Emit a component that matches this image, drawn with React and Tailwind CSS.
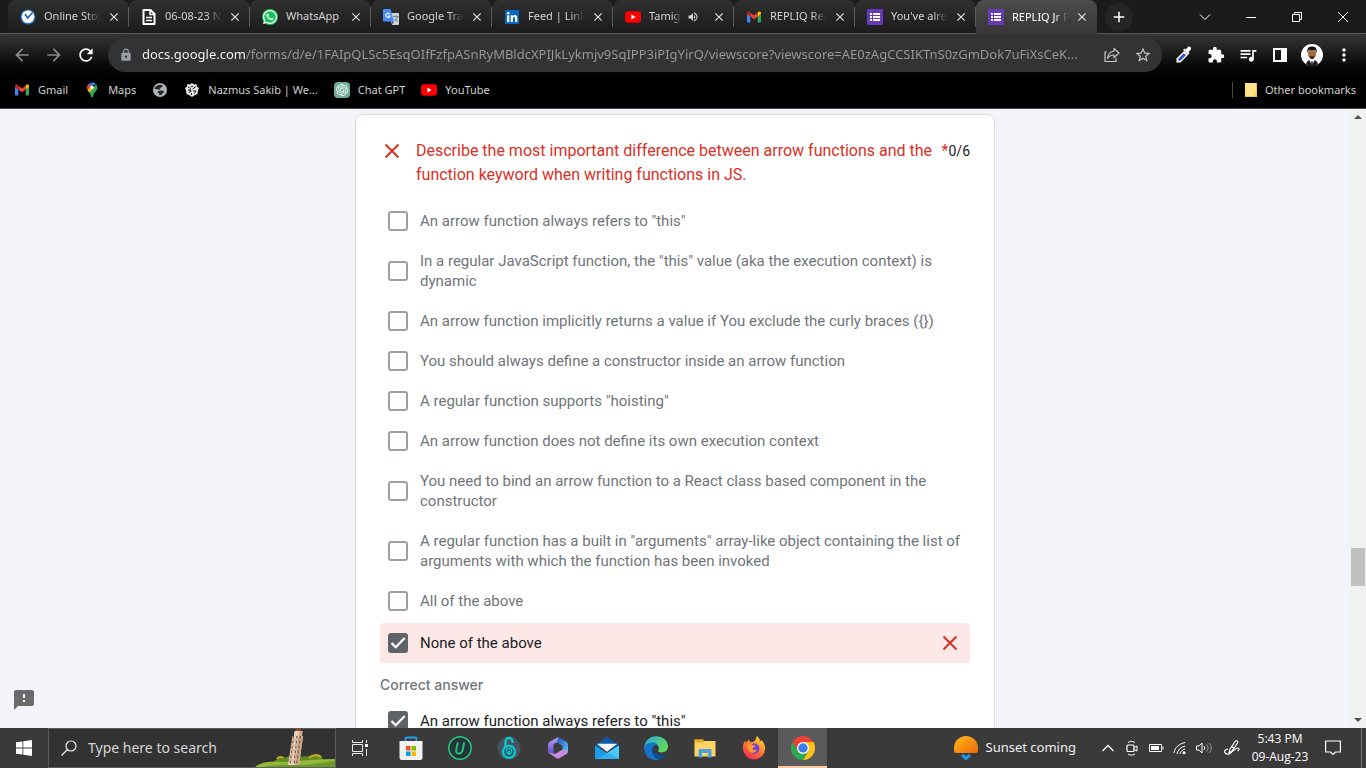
import { useId, useState } from "react";
import {
  MdArrowBack,
  MdArrowForward,
  MdRefresh,
  MdLock,
  MdStarBorder,
  MdExtension,
  MdQueueMusic,
  MdMoreVert,
  MdFeedback,
  MdClose,
  MdAdd,
  MdVolumeUp,
} from "react-icons/md";
import { FaWhatsapp } from "react-icons/fa";
import { SiOpenai } from "react-icons/si";

/* ---------- favicons ---------- */

const ClockFavicon = () => (
  <svg viewBox="0 0 16 16" className="size-4 shrink-0">
    <circle cx="8" cy="8" r="7.600" fill="#1f6fc9" />
    <circle cx="8" cy="7.800" r="6.300" fill="#fff" />
    <path d="M5 5l2.600 4 5-5.500" fill="none" stroke="#1b56a6" strokeWidth="1.500" />
  </svg>
);

const DocFavicon = () => (
  <svg viewBox="0 0 16 16" className="size-4 shrink-0" fill="none" stroke="#fff" strokeWidth="2">
    <path d="M2.500 1h7L13.500 5v10h-11z" strokeLinejoin="round" />
    <path d="M9 1v4.500h4M5 8.500h6M5 11.500h6" strokeWidth="1.500" />
  </svg>
);

const WhatsAppFavicon = () => (
  <span className="flex size-4 shrink-0 items-center justify-center rounded-full bg-[#19c35a] text-white">
    <FaWhatsapp className="size-4" />
  </span>
);

const TranslateFavicon = () => (
  <svg viewBox="0 0 16 16" className="size-4 shrink-0">
    <path d="M6 4h9a1 1 0 0 1 1 1v10a1 1 0 0 1-1 1H9z" fill="#cfd3d8" />
    <path d="M1 0h6.500l3.500 12.500H1a1 1 0 0 1-1-1V1a1 1 0 0 1 1-1z" fill="#4c8bf5" />
    <path d="M8.500 12.500H11L9.500 15.500z" fill="#3a54c4" />
    <path d="M10.500 7.500h5M13 6v1.500M14.500 8c-.5 2-2 3.500-3 4M11.800 9.500c.8 1.500 2 2.500 3 3" stroke="#607988" fill="none" strokeWidth=".9" />
    <path d="M6.800 5.200A2.100 2.100 0 1 0 7 7H5.200" stroke="#fff" fill="none" strokeWidth="1.100" />
  </svg>
);

const LinkedInFavicon = () => (
  <svg viewBox="0 0 16 16" className="size-4 shrink-0">
    <rect x="1" y="1" width="14" height="14" rx="1" fill="#0a66c2" />
    <circle cx="4.200" cy="4.300" r="1.300" fill="#fff" />
    <path d="M3.100 6.300h2.200V13H3.100zM6.700 6.300h2.100v.9c.4-.7 1.200-1.100 2.100-1.100 2 0 2.400 1.400 2.400 3.200V13h-2.200V9.700c0-.9-.1-1.700-1.100-1.700S8.900 8.800 8.900 9.600V13H6.700z" fill="#fff" />
  </svg>
);

const YouTubeFavicon = () => (
  <svg viewBox="0 0 16 16" className="size-4 shrink-0">
    <rect y="2.300" width="16" height="11.400" rx="3" fill="#f00" />
    <path d="M6.400 5.600v4.800L10.600 8z" fill="#fff" />
  </svg>
);

const GmailFavicon = () => (
  <svg viewBox="0 0 16 16" className="size-4 shrink-0">
    <path d="M1 5v7.500a1 1 0 0 0 1 1h2.300V7.300z" fill="#4285f4" />
    <path d="M15 5v7.500a1 1 0 0 1-1 1h-2.300V7.300z" fill="#34a853" />
    <path d="M11.700 3.600v3.900L15 5V4c0-1.400-1.500-2.100-2.600-1.200z" fill="#fbbc04" />
    <path d="M4.300 7.500V3.600L8 6.400l3.700-2.800v3.900L8 10.300z" fill="#ea4335" />
    <path d="M1 4v1l3.300 2.500V3.600l-.7-.8C2.500 1.900 1 2.600 1 4z" fill="#c5221f" />
  </svg>
);

const FormsFavicon = () => (
  <svg viewBox="0 0 16 16" className="size-4 shrink-0">
    <rect width="16" height="16" rx="1" fill="#673ab7" />
    <path d="M3 4h2v2H3zM3 7h2v2H3zM3 10h2v2H3zM6 4h7v2H6zM6 7h7v2H6zM6 10h7v2H6z" fill="#fff" />
  </svg>
);

const MapsIcon = () => (
  <svg viewBox="0 0 16 16" className="size-4">
    <path d="M8 .5a5.200 5.200 0 0 0-4 1.900L6.200 4.300z" fill="#1a73e8" />
    <path d="M4 2.400a5.200 5.200 0 0 0-.6 5.400L9.600 4z" fill="#ea4335" />
    <path d="M8 .5L6.200 4.300l5.800-2C11 1.100 9.600.5 8 .5z" fill="#4285f4" />
    <path d="M3.400 7.800c.5 1.200 1.400 2 2.200 3.200l5-6L8.300 4z" fill="#fbbc04" />
    <path d="M12 2.300c1.500 1.700 1.600 3.900.6 5.700-1.200 2.200-3 3-3.600 6.500-.3 1.400-1.600 1.400-2 0-.3-1.500-.8-2.500-1.400-3.500z" fill="#34a853" />
    <circle cx="8" cy="5.600" r="1.800" fill="#fff" />
  </svg>
);

const GlobeIcon = () => (
  <svg viewBox="0 0 16 16" className="size-4">
    <circle cx="8" cy="8" r="7" fill="#b0b5bb" />
    <path d="M6 3.200c2-1 4.500-.4 4.700.8.100 1.300-1.400 1-2.200 1.700-.6.600.2 1.400-.8 1.700C6.500 7.700 3.500 7 2.500 7 2.600 5.300 4.200 3.800 6 3.200zM8 8.500c1.500-.3 3.500 0 4 1 .3 1-1 1.200-1.500 2-.5.900-1.500 1.800-3 1.700-.8-.3.300-1.600-.6-2-.8-.4-1.500-.6-1.300-1.300.3-.8 1.500-1.200 2.400-1.400z" fill="#26282b" />
  </svg>
);

const CrestIcon = () => (
  <svg viewBox="0 0 16 16" className="size-4">
    <path d="M8 1l2 1.500 2.500-.5.500 2.500L15 6l-1 2.500L13.500 12l-2.500 1-3 2-3-2-2.500-1L2 8.500 1 6l2-1.500L3.500 2 6 2.500z" fill="#e6e6e6" />
    <path d="M4 5l3 1.500M12 4.500L8.500 7M4 8l3 .5-2 2.500M9 9h3l-1.500 2.500M7 4l1 1 1-1M7.500 11v2M6 7l1 3" stroke="#222" fill="none" strokeWidth="1" />
  </svg>
);

const ChatIcon = () => (
  <span className="flex size-4 items-center justify-center rounded-sm bg-[#74aa9c]">
    <SiOpenai className="size-3 text-white" />
  </span>
);

const FolderIcon = () => (
  <svg viewBox="0 0 12 14" className="h-3.5 w-3">
    <path d="M0 0h12v14H0z" fill="#ffe28a" />
    <path d="M0 14v-1h9v-3h2V0h1v14z" fill="#f0c33c" />
    <path d="M9.500 10.500h2v3h-2z" fill="#ffd75e" />
  </svg>
);

/* ---------- browser chrome ---------- */

const TABS = [
  { title: "Online Stop", icon: ClockFavicon },
  { title: "06-08-23 N", icon: DocFavicon },
  { title: "WhatsApp", icon: WhatsAppFavicon, plain: true },
  { title: "Google Tra", icon: TranslateFavicon },
  { title: "Feed | Link", icon: LinkedInFavicon },
  { title: "Tamiga", icon: YouTubeFavicon, audio: true },
  { title: "REPLIQ Rea", icon: GmailFavicon },
  { title: "You've alre", icon: FormsFavicon },
  { title: "REPLIQ Jr F", icon: FormsFavicon, active: true },
];

function Tab({ title, icon: Icon, audio, plain, active }) {
  return (
    <div
      className={
        active
          ? "flex h-full w-[121px] items-center rounded-t-lg bg-linear-to-b from-[#4c4c4c] to-[#363636] pl-3"
          : "flex h-full w-[121px] items-center rounded-t-lg border-b border-[#5a5a5a] bg-linear-to-b from-[#303030] to-[#1c1c1c] pl-3"
      }
    >
      <Icon />
      <span
        className={
          plain
            ? "ml-2 min-w-0 flex-1 overflow-hidden text-[11px] whitespace-nowrap text-[#d4d4d4]"
            : active
              ? "ml-2 min-w-0 flex-1 overflow-hidden mask-r-from-75% text-[11px] whitespace-nowrap text-white"
              : "ml-2 min-w-0 flex-1 overflow-hidden mask-r-from-75% text-[11px] whitespace-nowrap text-[#d4d4d4]"
        }
      >
        {title}
      </span>
      {audio && <MdVolumeUp className="mx-1.5 size-3 shrink-0 text-[#d4d4d4]" />}
      <button aria-label="Close tab" className="mx-1.5 flex size-4 shrink-0 items-center justify-center text-[#e4e4e4]">
        <MdClose className="size-3.5" />
      </button>
      <span className={active ? "h-5 w-px shrink-0" : "h-5 w-px shrink-0 bg-[#5c5c5c]"} />
    </div>
  );
}

function TabStrip() {
  return (
    <div className="flex h-[34px] bg-[#1b1b1b]">
      <div className="w-2 border-b border-[#5a5a5a]" />
      {TABS.map((t) => (
        <Tab key={t.title} {...t} />
      ))}
      <div className="flex flex-1 items-center border-b border-[#5a5a5a] pl-2">
        <button aria-label="New tab" className="flex size-7 items-center justify-center rounded-full bg-[#252525] text-white">
          <MdAdd className="size-[18px]" />
        </button>
        <div className="ml-auto flex h-7 text-white">
          <button aria-label="Search tabs" className="flex w-[46px] items-center justify-center">
            <svg viewBox="0 0 12 12" className="size-3" fill="none" stroke="currentColor">
              <path d="M1 3.500l5 5 5-5" />
            </svg>
          </button>
          <button aria-label="Minimize" className="flex w-[46px] items-center justify-center">
            <svg viewBox="0 0 10 10" className="size-2.5" stroke="currentColor">
              <path d="M0 5.500h10" />
            </svg>
          </button>
          <button aria-label="Restore" className="flex w-[46px] items-center justify-center">
            <svg viewBox="0 0 10 10" className="size-2.5" fill="none" stroke="currentColor">
              <path d="M.5 2.500h7v7h-7zM2.500 2.500v-2h7v7h-2" />
            </svg>
          </button>
          <button aria-label="Close" className="flex w-[46px] items-center justify-center">
            <svg viewBox="0 0 10 10" className="size-2.5" stroke="currentColor">
              <path d="M0 0l10 10M10 0L0 10" />
            </svg>
          </button>
        </div>
      </div>
    </div>
  );
}

function ToolButton({ label, children }) {
  return (
    <button aria-label={label} className="flex size-8 items-center justify-center">
      {children}
    </button>
  );
}

function Toolbar() {
  const [url, setUrl] = useState(
    "docs.google.com/forms/d/e/1FAIpQLSc5EsqOIfFzfpASnRyMBldcXPIJkLykmjv9SqIPP3iPIgYirQ/viewscore?viewscore=AE0zAgCCSIKTnS0zGmDok7uFiXsCeK...",
  );
  return (
    <div className="flex h-[42px] items-center text-white">
      <button aria-label="Back" className="ml-3 text-[#8a8a8a]">
        <MdArrowBack className="size-5" />
      </button>
      <button aria-label="Forward" className="ml-3 text-[#8a8a8a]">
        <MdArrowForward className="size-5" />
      </button>
      <button aria-label="Reload" className="ml-3">
        <MdRefresh className="size-5" />
      </button>
      <div className="ml-3 flex h-[34px] min-w-0 flex-1 items-center rounded-full bg-[#333] pr-2.5 pl-[11px]">
        <MdLock className="size-3.5 shrink-0 text-[#9aa0a6]" />
        <input
          aria-label="Address"
          value={url}
          onChange={(e) => setUrl(e.target.value)}
          className="ml-[9px] min-w-0 flex-1 bg-linear-to-r from-white from-[104px] to-[#9a9a9a] to-[104px] bg-clip-text text-[13px] text-transparent outline-none"
        />
        <button aria-label="Share" className="ml-1 text-[#c4c7ca]">
          <svg viewBox="0 0 16 16" className="size-4" fill="none" stroke="currentColor" strokeWidth="1.200">
            <path d="M3 5H1v9.500h11V11" />
            <path d="M10 1.500l5 4.500-5 4.500V8C7 8 5 9 3.500 11.500 4 7.500 6.500 4.500 10 4z" strokeLinejoin="round" />
          </svg>
        </button>
        <button aria-label="Bookmark" className="ml-3.5 text-[#c4c7ca]">
          <MdStarBorder className="size-[18px]" />
        </button>
      </div>
      <div className="flex items-center px-1.5">
        <ToolButton label="Color picker">
          <svg viewBox="0 0 20 20" className="size-5">
            <path d="M10 6l4 4-7.500 7.500H2.500v-4z" fill="#fff" />
            <path d="M9.800 8.300l2 2-5.500 5.500H4.300v-2z" fill="#2f4fc4" />
            <path d="M9 5l1.500-1.500 1 1L14 2c1.500-1.300 4 1 2.700 2.700L14.500 7.200l1 1L14 9.800z" fill="#fff" />
          </svg>
        </ToolButton>
        <ToolButton label="Extensions">
          <MdExtension className="size-[18px]" />
        </ToolButton>
        <ToolButton label="Media controls">
          <MdQueueMusic className="size-5" />
        </ToolButton>
        <ToolButton label="Side panel">
          <svg viewBox="0 0 14 14" className="size-3.5">
            <path d="M0 0h14v14H0zM2 2v10h6V2z" fill="#fff" fillRule="evenodd" />
          </svg>
        </ToolButton>
        <ToolButton label="Profile">
          <svg viewBox="0 0 22 22" className="size-[22px]">
            <circle cx="11" cy="11" r="11" fill="#fff" />
            <path d="M5 20.200C5.500 17.500 8 15.500 11 15.500s5.500 2 6 4.700A11 11 0 0 1 5 20.200z" fill="#171a26" />
            <path d="M9 15h4l.5 1.500L11 21l-2.500-4.500z" fill="#fff" />
            <path d="M10.500 17h1l.5 5h-2z" fill="#222" />
            <ellipse cx="11" cy="9.800" rx="4" ry="5.300" fill="#a5694a" />
            <path d="M6.600 9C5.500 4.500 7.500 2.500 11 2.500s5.500 2 4.400 6.500c-.6-2-1-3-1.800-3.200-2 .4-3.600.4-5.200 0C7.500 6 7 7 6.600 9z" fill="#161210" />
            <path d="M8.500 12.500c1.500-.8 3.500-.8 5 0-.3 2-1.300 2.600-2.500 2.600s-2.200-.6-2.500-2.600z" fill="#4a2c20" />
          </svg>
        </ToolButton>
        <ToolButton label="Menu">
          <MdMoreVert className="size-5" />
        </ToolButton>
      </div>
    </div>
  );
}

function Bookmark({ icon: Icon, children, label }) {
  return (
    <a href="#" aria-label={label} className="flex items-center gap-2 whitespace-nowrap">
      <Icon />
      {children}
    </a>
  );
}

function BookmarkBar() {
  return (
    <nav className="flex h-8 items-center pr-[10px] pb-1 pl-3.5 text-[11px] text-[#d0d0d0]">
      <div className="flex items-center gap-4">
        <Bookmark icon={GmailFavicon}>Gmail</Bookmark>
        <Bookmark icon={MapsIcon}>Maps</Bookmark>
        <Bookmark icon={GlobeIcon} label="Website" />
        <Bookmark icon={CrestIcon}>Nazmus Sakib | We...</Bookmark>
        <Bookmark icon={ChatIcon}>Chat GPT</Bookmark>
        <Bookmark icon={YouTubeFavicon}>YouTube</Bookmark>
      </div>
      <span className="mr-3 ml-auto h-4 w-px bg-[#4a4a4a]" />
      <Bookmark icon={FolderIcon}>Other bookmarks</Bookmark>
    </nav>
  );
}

/* ---------- form ---------- */

const CrossMark = () => (
  <svg viewBox="0 0 24 24" className="size-6 shrink-0" stroke="#d93025" strokeWidth="2">
    <path d="M5.500 5.500l13 13M18.500 5.500l-13 13" />
  </svg>
);

function Option({ children, checked = false, wrong = false }) {
  const id = useId();
  const [on, setOn] = useState(checked);
  return (
    <div className={wrong ? "mt-0.5 flex items-center rounded bg-[#fce8e6] px-2 py-2" : "flex items-center px-2 py-2.5"}>
      <span className="grid size-5 shrink-0">
        <input
          id={id}
          type="checkbox"
          checked={on}
          onChange={(e) => setOn(e.target.checked)}
          className="col-start-1 row-start-1 size-5 appearance-none rounded-[3px] border-2 border-[#9aa0a6] checked:border-[#5f6368] checked:bg-[#5f6368]"
        />
        {on && (
          <svg viewBox="0 0 20 20" className="pointer-events-none col-start-1 row-start-1 size-5" fill="none" stroke="#fff" strokeWidth="2.200">
            <path d="M3.500 10l4.200 4.200L16.700 5" />
          </svg>
        )}
      </span>
      <label
        htmlFor={id}
        className={
          checked
            ? "ml-3 flex-1 text-[15px] leading-5 text-[#202124]"
            : "ml-3 flex-1 text-[15px] leading-5 text-[#70757a]"
        }
      >
        {children}
      </label>
      {wrong && <CrossMark />}
    </div>
  );
}

const OPTIONS = [
  'An arrow function always refers to "this"',
  'In a regular JavaScript function, the "this" value (aka the execution context) is dynamic',
  "An arrow function implicitly returns a value if You exclude the curly braces ({})",
  "You should always define a constructor inside an arrow function",
  'A regular function supports "hoisting"',
  "An arrow function does not define its own execution context",
  "You need to bind an arrow function to a React class based component in the constructor",
  'A regular function has a built in "arguments" array-like object containing the list of arguments with which the function has been invoked',
  "All of the above",
];

function QuestionCard() {
  return (
    <section className="mx-auto mt-[5px] w-full max-w-[640px] rounded-lg border border-[#dadce0] bg-white px-6 pt-6 font-[Roboto,sans-serif]">
      <div className="flex">
        <CrossMark />
        <h2 className="ml-3 flex-1 text-base text-[#d93025]">
          Describe the most important difference between arrow functions and the function keyword when writing
          functions in JS.
        </h2>
        <span className="ml-1 text-base text-[#d93025]">*</span>
        <span className="text-sm leading-6 text-[#202124]">0/6</span>
      </div>
      <div className="mt-3.5">
        {OPTIONS.map((o) => (
          <Option key={o}>{o}</Option>
        ))}
        <Option checked wrong>
          None of the above
        </Option>
      </div>
      <p className="mt-3 mb-1.5 font-[Inter,sans-serif] text-sm font-medium text-[#70757a]">Correct answer</p>
      <Option checked>An arrow function always refers to "this"</Option>
    </section>
  );
}

function ScrollBar() {
  return (
    <div className="flex w-4 flex-col items-center bg-[#f1f1f1] py-1.5">
      <svg viewBox="0 0 8 4" className="h-1 w-2" fill="#505050">
        <path d="M0 4l4-4 4 4z" />
      </svg>
      <div className="flex-[429]" />
      <div className="h-[38px] w-3.5 bg-[#c1c1c1]" />
      <div className="flex-[132]" />
      <svg viewBox="0 0 8 4" className="h-1 w-2" fill="#505050">
        <path d="M0 0h8L4 4z" />
      </svg>
    </div>
  );
}

/* ---------- taskbar ---------- */

const StoreIcon = () => (
  <svg viewBox="0 0 24 24" className="size-6">
    <path d="M6.500 6V2.500a1 1 0 0 1 1-1h9a1 1 0 0 1 1 1V6" fill="none" stroke="#1ca4ea" strokeWidth="1.800" />
    <path d="M.5 5h23v16.500A2.500 2.500 0 0 1 21 24H3a2.500 2.500 0 0 1-2.500-2.500z" fill="#f2f2f2" />
    <path d="M7 10h4.500v4.500H7z" fill="#f25022" />
    <path d="M12.500 10H17v4.500h-4.500z" fill="#7fba00" />
    <path d="M7 15.500h4.500V20H7z" fill="#00a4ef" />
    <path d="M12.500 15.500H17V20h-4.500z" fill="#ffb900" />
  </svg>
);

const UninstallerIcon = () => (
  <svg viewBox="0 0 24 24" className="size-6" fill="none" stroke="#1fc77d">
    <circle cx="12" cy="12" r="11.200" fill="#26333a" strokeWidth="1.500" />
    <path d="M9.800 6.500L8.300 13.500c-.6 3 .8 4 2.600 4s3.300-1.200 3.800-4l1.500-7" strokeWidth="2" />
  </svg>
);

const LockAppIcon = () => (
  <svg viewBox="0 0 24 24" className="size-6" fill="none">
    <circle cx="12" cy="12" r="11.500" fill="#46535c" />
    <path d="M8.500 11V5.500a3.500 3.500 0 0 1 7 0V7" stroke="#12c3cf" strokeWidth="2.400" />
    <circle cx="12" cy="15.800" r="6" fill="#204e58" stroke="#12c3cf" strokeWidth="2.400" />
    <circle cx="12" cy="15.200" r="2.800" stroke="#12c3cf" strokeWidth="1.200" />
    <path d="M11 14.500h2v4.500h-2z" fill="#12c3cf" />
  </svg>
);

const OfficeIcon = () => (
  <svg viewBox="0 0 24 24" className="size-6">
    <defs>
      <linearGradient id="of1" x1="0" y1="0" x2="0" y2="1">
        <stop offset="0" stopColor="#b9a2f5" />
        <stop offset="1" stopColor="#5a47c7" />
      </linearGradient>
      <linearGradient id="of2" x1="0" y1="0" x2="1" y2="1">
        <stop offset="0" stopColor="#1d4fc0" />
        <stop offset="1" stopColor="#5fc4f7" />
      </linearGradient>
    </defs>
    <path d="M12.500 1L4 5.500A3.500 3.500 0 0 0 2 8.600v8L7.500 19V9.500c0-1 .4-1.600 1.200-2L14 5z" fill="url(#of1)" />
    <path d="M12.500 1l7.500 4.500a3.500 3.500 0 0 1 2 3.100v7L16.500 17V9.700L11 6.500z" fill="url(#of2)" />
    <path d="M2 16.500l8.500 5.800a3 3 0 0 0 3 0L20.500 18c1-.7 1.500-1.500 1.500-3l-5.500-1.500L10 17.500c-1 .5-2 .3-2.500 0z" fill="#c78be0" />
  </svg>
);

const MailIcon = () => (
  <svg viewBox="0 0 24 24" className="size-6">
    <path d="M0 9.500L12 .8l12 8.700V12H0z" fill="#0f5ba8" />
    <path d="M0 9.500V23h24V9.500L12 17z" fill="#1c9be6" />
    <path d="M24 9.500V23L12.500 16.700z" fill="#4ccaf7" />
    <path d="M2 23l11-6.500L24 23z" fill="#2fb3f0" />
    <path d="M1.800 7.800h20.400L12 15.800z" fill="#f4f6f8" />
  </svg>
);

const EdgeIcon = () => (
  <svg viewBox="0 0 24 24" className="size-6">
    <defs>
      <linearGradient id="eg1" x1="0" y1="0" x2="1" y2=".5">
        <stop offset="0" stopColor="#2aa9e8" />
        <stop offset="1" stopColor="#5edb5a" />
      </linearGradient>
    </defs>
    <path d="M.3 10.500C1.500 4 6.300.2 12 .2 19 .2 24 5 24 10.300c0 4-3 6.200-6 6.200s-4.500-1.200-3.800-2c1.600-1.800.8-6.500-4.700-6.500C5 8 1.500 10 .3 13z" fill="url(#eg1)" />
    <path d="M.2 12.500C.2 9 4 6.500 8.500 6.500c3 0 5 1.500 5.800 3-3-1.500-6.300 1-6.300 5 0 4.500 3.500 8 7.500 9.200C7 25.500.2 20 .2 12.500z" fill="#1474c9" />
    <path d="M10 11c-3 4 0 11.500 5.500 12.700 3.200-.8 6-3 7.300-5.700-3 1.800-8.300 1.800-10.800-1-1.700-1.800-1.600-4.500-2-6z" fill="#0c4c92" />
  </svg>
);

const ExplorerIcon = () => (
  <svg viewBox="0 0 24 24" className="size-6">
    <path d="M1.500 3.500h8l1.500 2h-9.500z" fill="#e09b14" />
    <path d="M1.500 5h21v15.500h-21z" fill="#fcd466" />
    <path d="M1.500 3.500h9v3h-9z" fill="#eba91d" />
    <path d="M5.500 21.500V14a1 1 0 0 1 1-1h11a1 1 0 0 1 1 1v7.500H15V17H9v4.500z" fill="#4ba0e0" />
  </svg>
);

const FirefoxIcon = () => (
  <svg viewBox="0 0 24 24" className="size-6">
    <defs>
      <linearGradient id="ff1" x1=".8" y1="0" x2=".2" y2="1">
        <stop offset="0" stopColor="#ffe43c" />
        <stop offset=".5" stopColor="#ff7a2a" />
        <stop offset="1" stopColor="#f0205e" />
      </linearGradient>
    </defs>
    <path d="M15 0c2 2 3 3.500 3 5.500 1-.3 1.200-1 1.200-1.500 2.500 2 4 5.500 4 8.500A11.200 11.200 0 1 1 .8 12c0-3 .8-5.500 2.500-7.500 0 1 .2 1.800.7 2.300L7 3.500c.2 1.500 1 2.300 2 2.800 2-.3 4-1 4.500-2.300C13.800 2.500 14.300 1 15 0z" fill="url(#ff1)" />
    <circle cx="12.200" cy="12.500" r="5.200" fill="#7542d8" />
    <path d="M5 9c2-1.500 4.500-1 6 .2 1.500.2 2.500.3 2.500 1-.8 1.200-2.500 1-2.800 2.300 0 1.500 1.800 2.200 4 1-1 3.500-5 4.200-7.500 1.700C6 13.800 5.500 11 5 9z" fill="#ff9a2e" />
  </svg>
);

const ChromeIcon = () => (
  <svg viewBox="0 0 24 24" className="size-6">
    <path d="M12 6h10.400A12 12 0 0 1 12 24l5.200-9z" fill="#fbc116" />
    <path d="M1.600 6A12 12 0 0 0 12 24l5.200-9H6.800z" fill="#2da94f" />
    <path d="M1.600 6A12 12 0 0 1 22.400 6H12L6.800 15z" fill="#ea4335" />
    <circle cx="12" cy="12" r="6" fill="#fff" />
    <circle cx="12" cy="12" r="4.700" fill="#3b7ded" />
  </svg>
);

const TaskViewIcon = () => (
  <svg viewBox="0 0 16 16" className="size-4" fill="none" stroke="#e8e8e8">
    <path d="M.5 0v2.500h10V0M.5 4.500h10v7H.5zM.5 16v-2.500h10V16" />
    <path d="M14.500 0v3M14.500 9v7" />
    <path d="M13 4h3v3h-3z" fill="#fff" stroke="none" />
  </svg>
);

const APPS = [
  { name: "Microsoft Store", icon: StoreIcon },
  { name: "Uninstaller", icon: UninstallerIcon },
  { name: "Privacy lock", icon: LockAppIcon },
  { name: "Microsoft 365", icon: OfficeIcon },
  { name: "Mail", icon: MailIcon },
  { name: "Edge", icon: EdgeIcon },
  { name: "File Explorer", icon: ExplorerIcon },
  { name: "Firefox", icon: FirefoxIcon },
];

const TowerArt = () => (
  <svg viewBox="0 0 80 40" className="h-[38px] w-20 shrink-0" preserveAspectRatio="xMaxYMax slice">
    <path d="M18 36c3-5 6-3 8-6 2-1 4 1 6 0 3-2 5 1 8-1 4-2 6 2 10 0 4 2 8-2 12-2 3 0 6 3 6 6v6H18z" fill="#5f8a1e" />
    <path d="M22 32c2-3 5-2 6-1M54 31c3-3 8-4 12-1" stroke="#c9a92c" strokeWidth="2" fill="none" />
    <path d="M0 40c6-6 20-6 34-5 16-2 30-3 46-3v8z" fill="#94b83a" />
    <path d="M10 40c10-3 30-2 40-2l30-4v6z" fill="#6c9a2a" />
    <path d="M39.500 4h8l-.6 5H48L44 38H33L37.500 9h1.300z" fill="#ecd2ba" />
    <path d="M44 4h3.500l-.6 5H48L44 38h-4z" fill="#d1ab8e" />
    <path d="M41 1h4l1.500 3h-6z" fill="#a8402c" />
    <path d="M37 13h10.500M36.300 18h10.500M35.600 23h10.500M34.800 28h10.500M34 33h10.500" stroke="#b08a70" strokeWidth=".8" />
    <path d="M38.500 9l-3.500 29M42 9l-3 29M45.500 9l-4 29" stroke="#6d5044" strokeWidth="1.200" strokeDasharray="2.500 2.500" />
  </svg>
);

const TRAY = [
  {
    name: "Show hidden icons",
    art: <path d="M2.500 11L8 5.500l5.500 5.500" strokeWidth="1.300" />,
  },
  {
    name: "Meet now",
    art: (
      <>
        <rect x="3" y="5" width="7" height="6.500" rx="1" strokeWidth="1.200" />
        <path d="M10 7.500l3-1.500v5l-3-1.500M4 2.500c2-1.500 5-1.500 7 0M4 14c2 1.500 5 1.500 7 0" />
      </>
    ),
  },
  {
    name: "Battery",
    art: (
      <>
        <path d="M1.500 4.500h12v7h-12zM15 6.500v3" />
        <path d="M3 6h8v4H3z" fill="#fff" stroke="none" />
      </>
    ),
  },
  {
    name: "Wi-Fi",
    art: (
      <>
        <path d="M2 13C3 7 7 4 13 2.500M5 14c1-4.500 4-7 8-8M8 14c.5-2.500 2.500-4.200 5-5" />
        <circle cx="12" cy="12.800" r="1.500" fill="#fff" stroke="none" />
      </>
    ),
  },
  {
    name: "Volume",
    art: (
      <>
        <path d="M.5 6v4H3l3 3V3L3 6zM8 6c.8 1 .8 3 0 4" />
        <path d="M10.500 4.500c2 2 2 5 0 7M13 3c3 3 3 7 0 10" stroke="#999" />
      </>
    ),
  },
];

function Taskbar() {
  return (
    <footer className="flex h-10 shrink-0 items-stretch bg-[#3a3a3a] font-[Open_Sans,sans-serif] text-white">
      <button aria-label="Start" className="flex w-12 items-center justify-center">
        <svg viewBox="0 0 16 16" className="size-4" fill="#fff">
          <path d="M0 2.300L6.500 1.400v6.200H0zM7.300 1.300L16 0v7.600H7.300zM0 8.400h6.500v6.200L0 13.700zM7.300 8.400H16V16l-8.700-1.300z" />
        </svg>
      </button>
      <div className="flex w-72 items-center border border-[#5c5c5c] bg-[#323232] pl-3">
        <svg viewBox="0 0 16 16" className="size-4 shrink-0" fill="none" stroke="#eee" strokeWidth="1.200">
          <circle cx="10" cy="6" r="5" />
          <path d="M6.500 9.500L.5 15.500" />
        </svg>
        <input
          aria-label="Search"
          placeholder="Type here to search"
          className="ml-[11px] min-w-0 flex-1 font-[Noto_Sans,sans-serif] text-sm outline-none placeholder:text-[#d6d6d6]"
        />
        <TowerArt />
      </div>
      <button aria-label="Task view" className="flex w-12 items-center justify-center">
        <TaskViewIcon />
      </button>
      <div className="ml-0.5 flex">
        {APPS.map(({ name, icon: Icon }) => (
          <button key={name} aria-label={name} className="flex w-[49px] items-center justify-center">
            <Icon />
          </button>
        ))}
        <button aria-label="Chrome" className="flex w-[49px] items-center justify-center border-b-2 border-[#f7c9a4] bg-[#5a5a5a] pt-0.5">
          <ChromeIcon />
        </button>
      </div>
      <div className="ml-auto flex items-center">
        <button className="flex items-center gap-2 font-[Noto_Sans,sans-serif] text-[13px] whitespace-nowrap text-[#f0f0f0]">
          <svg viewBox="0 0 24 24" className="size-6">
            <defs>
              <linearGradient id="sun" x1="0" y1="0" x2="1" y2="1">
                <stop offset="0" stopColor="#ffb81c" />
                <stop offset="1" stopColor="#ee6a08" />
              </linearGradient>
            </defs>
            <path d="M2 17a2 2 0 0 1-2-2v-3a12 12 0 0 1 24 0v3a2 2 0 0 1-2 2z" fill="url(#sun)" />
            <path d="M8 19l4 3.500 4-3.500" fill="none" stroke="#2196e8" strokeWidth="3" />
          </svg>
          Sunset coming
        </button>
        <div className="ml-6 flex items-center gap-2">
          {TRAY.map(({ name, art }) => (
            <button key={name} aria-label={name}>
              <svg viewBox="0 0 16 16" className="size-4" fill="none" stroke="#fff">
                {art}
              </svg>
            </button>
          ))}
        </div>
        <button aria-label="Pen input" className="ml-3">
          <svg viewBox="0 0 16 16" className="size-4" fill="none" stroke="#fff" strokeWidth="1.100">
            <path d="M5 13L6 9l5.500-8c1-.8 2.800.3 2.300 1.500L8 11zM8 7l2.500 1.500M4 9C1 9.500 0 11 .8 12.500S4 15 6 13.500 12 8 13.500 8s2.500 1.500 0 3" />
          </svg>
        </button>
        <button className="ml-1 flex w-[72px] flex-col items-center text-xs leading-[18px] whitespace-nowrap">
          <span>5:43 PM</span>
          <span>09-Aug-23</span>
        </button>
        <button aria-label="Notifications" className="ml-2 flex w-[18px] justify-center">
          <svg viewBox="0 0 16 16" className="size-4" fill="none" stroke="#fff" strokeWidth="1.200">
            <path d="M.6 1h14.800v11H10.500L8 14.500 5.500 12H.6z" />
          </svg>
        </button>
        <span className="mr-1 ml-[19px] h-10 w-px bg-[#777]" />
      </div>
    </footer>
  );
}

export default function App() {
  return (
    <div className="flex h-screen flex-col overflow-hidden bg-[#f3f4f9]">
      <header className="shrink-0 font-[Noto_Sans,sans-serif]">
        <TabStrip />
        <div className="border-b border-[#4a4a4a] bg-linear-to-b from-[#363636] to-black to-75%">
          <Toolbar />
          <BookmarkBar />
        </div>
      </header>
      <main className="flex min-h-0 flex-1">
        <div className="min-w-0 flex-1 overflow-hidden">
          <QuestionCard />
        </div>
        <button aria-label="Report a problem" className="fixed bottom-14 left-3 text-[#6b6b6b]">
          <MdFeedback className="size-6" />
        </button>
        <ScrollBar />
      </main>
      <Taskbar />
    </div>
  );
}
